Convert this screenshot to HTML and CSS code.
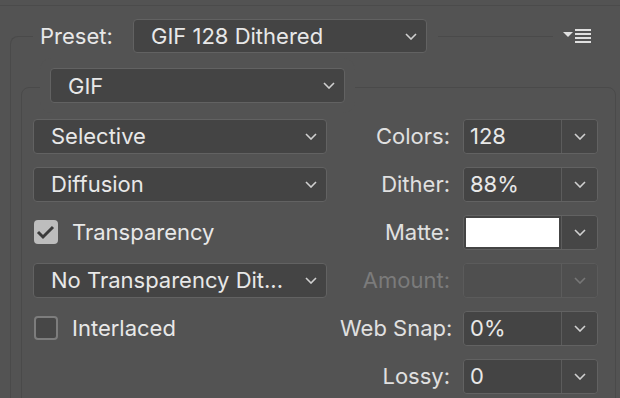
FILE: index.html
```html
<!DOCTYPE html>
<html lang="en">
<head>
    <meta charset="UTF-8">
    <meta name="viewport" content="width=device-width, initial-scale=1.0">
    <title>Save for Web - GIF</title>
    <link rel="stylesheet" href="styles.css">
</head>
<body>

    <div class="panel">
        <div class="group group-outer">
            <div class="preset-row">
                <div class="preset-main">
                    <span class="preset-label">Preset:</span>
                    <div class="select select-preset">
                        <span>GIF 128 Dithered</span>
                        <svg class="chev" viewBox="0 0 12 7"><polyline points="1,1 6,6 11,1"/></svg>
                    </div>
                </div>
                <div class="preset-spacer"></div>
                <div class="menu-btn">
                    <svg width="28" height="14" viewBox="0 0 28 14">
                        <polygon points="0,3 10,3 5,8" fill="#e0e0e0"/>
                        <rect x="12" y="0" width="16" height="2" fill="#e0e0e0"/>
                        <rect x="12" y="4" width="16" height="2" fill="#e0e0e0"/>
                        <rect x="12" y="8" width="16" height="2" fill="#e0e0e0"/>
                        <rect x="12" y="12" width="16" height="2" fill="#e0e0e0"/>
                    </svg>
                </div>
            </div>

            <div class="group group-inner">
                <div class="format-row">
                    <div class="select select-format">
                        <span>GIF</span>
                        <svg class="chev" viewBox="0 0 12 7"><polyline points="1,1 6,6 11,1"/></svg>
                    </div>
                </div>

                <div class="settings">
                    <!-- row 1 -->
                    <div class="select">
                        <span>Selective</span>
                        <svg class="chev" viewBox="0 0 12 7"><polyline points="1,1 6,6 11,1"/></svg>
                    </div>
                    <span class="field-label">Colors:</span>
                    <div class="combo">
                        <span class="combo-value">128</span>
                        <span class="combo-btn"><svg class="chev" viewBox="0 0 12 7"><polyline points="1,1 6,6 11,1"/></svg></span>
                    </div>

                    <!-- row 2 -->
                    <div class="select">
                        <span>Diffusion</span>
                        <svg class="chev" viewBox="0 0 12 7"><polyline points="1,1 6,6 11,1"/></svg>
                    </div>
                    <span class="field-label">Dither:</span>
                    <div class="combo">
                        <span class="combo-value">88%</span>
                        <span class="combo-btn"><svg class="chev" viewBox="0 0 12 7"><polyline points="1,1 6,6 11,1"/></svg></span>
                    </div>

                    <!-- row 3 -->
                    <label class="checkbox">
                        <span class="box checked">
                            <svg viewBox="0 0 24 24"><polyline points="4,12 9,17 19,7"/></svg>
                        </span>
                        Transparency
                    </label>
                    <span class="field-label">Matte:</span>
                    <div class="combo">
                        <span class="combo-value swatch"><span class="swatch-fill"></span></span>
                        <span class="combo-btn"><svg class="chev" viewBox="0 0 12 7"><polyline points="1,1 6,6 11,1"/></svg></span>
                    </div>

                    <!-- row 4 -->
                    <div class="select">
                        <span>No Transparency Dit...</span>
                        <svg class="chev" viewBox="0 0 12 7"><polyline points="1,1 6,6 11,1"/></svg>
                    </div>
                    <span class="field-label disabled">Amount:</span>
                    <div class="combo disabled">
                        <span class="combo-value"></span>
                        <span class="combo-btn"><svg class="chev" viewBox="0 0 12 7"><polyline points="1,1 6,6 11,1"/></svg></span>
                    </div>

                    <!-- row 5 -->
                    <label class="checkbox">
                        <span class="box"></span>
                        Interlaced
                    </label>
                    <span class="field-label">Web Snap:</span>
                    <div class="combo">
                        <span class="combo-value">0%</span>
                        <span class="combo-btn"><svg class="chev" viewBox="0 0 12 7"><polyline points="1,1 6,6 11,1"/></svg></span>
                    </div>

                    <!-- row 6 -->
                    <span></span>
                    <span class="field-label">Lossy:</span>
                    <div class="combo">
                        <span class="combo-value">0</span>
                        <span class="combo-btn"><svg class="chev" viewBox="0 0 12 7"><polyline points="1,1 6,6 11,1"/></svg></span>
                    </div>
                </div>
            </div>
        </div>
    </div>

</body>
</html>
```

FILE: styles.css
```css
body {
    margin: 0;
    background: #535353;
    color: #e8e8e8;
    font-family: Inter, Roboto, "Liberation Sans", sans-serif;
    font-size: 22px;
    height: 398px;
    overflow: hidden;
}
.panel {
    margin-top: 5px;
    border-top: 1px solid #4b4b4b;
}
.group {
    border: 1px solid #4a4a4a;
    border-radius: 8px;
}
.group-outer {
    margin: 30px 5px 0 10px;
    padding: 0 0 20px 10px;
    border-right: none;
    border-top-right-radius: 0;
}
.preset-row {
    display: flex;
    align-items: center;
    height: 34px;
    margin-top: -18px;
    padding-left: 12px;
}
.preset-main {
    display: flex;
    align-items: center;
    gap: 13px;
    padding: 0 11px 0 7px;
    background: #535353;
}
.preset-label {
    width: 80px;
    white-space: nowrap;
}
.preset-spacer {
    flex: 1;
}
.menu-btn {
    display: flex;
    padding: 0 24px 0 10px;
    background: #535353;
}
.select {
    display: flex;
    align-items: center;
    justify-content: space-between;
    box-sizing: border-box;
    height: 35px;
    padding: 0 9px 0 17px;
    background: #444444;
    border: 1px solid #626262;
    border-radius: 4px;
    white-space: nowrap;
}
.select-preset {
    width: 294px;
    height: 34px;
}
.chev {
    flex-shrink: 0;
    width: 12px;
    height: 7px;
    fill: none;
    stroke: #d0d0d0;
    stroke-width: 1.6;
}
.group-inner {
    margin-top: 34px;
    margin-right: -1px;
    padding-bottom: 20px;
}
.format-row {
    display: flex;
    margin-top: -20px;
    padding-left: 18px;
}
.select-format {
    width: 295px;
    margin-left: 10px;
    box-shadow: 0 0 0 10px #535353;
}
.settings {
    display: grid;
    grid-template-columns: 294px 110px 135px;
    grid-auto-rows: 48px;
    column-gap: 13px;
    align-items: center;
    margin-top: 9px;
    padding: 0 11px;
}
.field-label {
    text-align: right;
    color: #e0e0e0;
    white-space: nowrap;
}
.field-label.disabled {
    color: #7b7b7b;
}
.combo {
    display: flex;
    box-sizing: border-box;
    height: 35px;
    border: 1px solid #626262;
    border-radius: 4px;
    overflow: hidden;
}
.combo-value {
    flex: 1;
    display: flex;
    align-items: center;
    padding-left: 6px;
    background: #444444;
}
.combo-btn {
    width: 35px;
    display: flex;
    align-items: center;
    justify-content: center;
    border-left: 1px solid #5c5c5c;
    background: #464646;
}
.combo.disabled {
    border-color: #5b5b5b;
}
.combo.disabled .combo-value,
.combo.disabled .combo-btn {
    background: #4f4f4f;
}
.combo.disabled .chev {
    stroke: #777777;
}
.swatch {
    padding: 2px;
}
.swatch-fill {
    flex: 1;
    align-self: stretch;
    background: #ffffff;
}
.checkbox {
    display: flex;
    align-items: center;
    gap: 14px;
    padding-left: 1px;
}
.box {
    box-sizing: border-box;
    width: 24px;
    height: 24px;
    border: 2px solid #7d7d7d;
    border-radius: 4px;
    background: #474747;
}
.box.checked {
    border: none;
    background: #bdbdbd;
}
.box svg {
    width: 24px;
    height: 24px;
    fill: none;
    stroke: #3b3b3b;
    stroke-width: 3;
}
```
